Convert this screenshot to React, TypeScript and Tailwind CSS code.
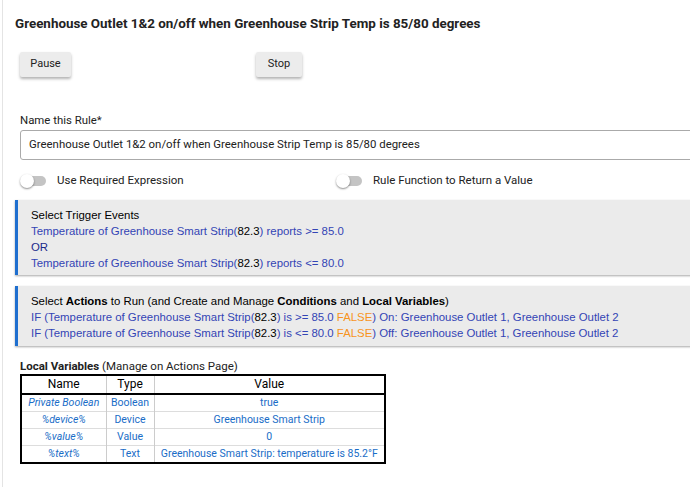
import React from 'react';

const boxFont = { fontFamily: '"Liberation Sans", Arial, sans-serif' };

function Toggle({ label }: { label: string }) {
  return (
    <div className="flex items-center">
      <div className="relative h-[14px] w-[26px]">
        <div className="absolute left-[2px] top-[2px] h-[10px] w-[24px] rounded-full bg-[#c4c4c4]" />
        <div className="absolute left-0 top-0 h-[14px] w-[14px] rounded-full bg-white shadow-[0_1px_2px_rgba(0,0,0,0.45)]" />
      </div>
      <span className="ml-[11px] text-[11.5px] text-[#222]">{label}</span>
    </div>
  );
}

function Button({ children, className = '' }: { children: React.ReactNode; className?: string }) {
  return (
    <button
      className={`h-[25px] rounded-[2px] bg-[#ececec] text-[11px] text-[#222] shadow-[0_2px_3px_rgba(0,0,0,0.3)] ${className}`}
    >
      {children}
    </button>
  );
}

const vars = [
  ['Private Boolean', 'Boolean', 'true'],
  ['%device%', 'Device', 'Greenhouse Smart Strip'],
  ['%value%', 'Value', '0'],
  ['%text%', 'Text', 'Greenhouse Smart Strip: temperature is 85.2°F'],
];

export default function App() {
  const num = <span className="text-black">82.3</span>;
  const no = <span className="text-[#f7941d]">FALSE</span>;

  return (
    <div
      className="h-[487px] w-[690px] overflow-hidden bg-white"
      style={{ fontFamily: 'Roboto, "Liberation Sans", sans-serif' }}
    >
      <div className="ml-[2px] h-full border-l border-[#e4e4e4] pl-[12px]">
        <h1 className="pt-[14px] text-[13.4px] font-bold leading-[20px] text-[#222]">
          Greenhouse Outlet 1&amp;2 on/off when Greenhouse Strip Temp is 85/80 degrees
        </h1>

        <div className="mt-[18px] flex pl-[5px]">
          <Button className="w-[51px]">Pause</Button>
          <Button className="ml-[185px] w-[46px]">Stop</Button>
        </div>

        <div className="mt-[35px] pl-[5px]">
          <div className="text-[11.4px] leading-[16px] text-[#222]">Name this Rule*</div>
          <div className="mt-[2px] flex h-[30px] w-[700px] items-center rounded-[3px] border border-[#aaa] pl-[8px] text-[11.4px] text-[#222]">
            Greenhouse Outlet 1&amp;2 on/off when Greenhouse Strip Temp is 85/80 degrees
          </div>
          <div className="mt-[12px] flex">
            <div className="w-[316px]">
              <Toggle label="Use Required Expression" />
            </div>
            <Toggle label="Rule Function to Return a Value" />
          </div>
        </div>

        <div
          className="mt-[11px] w-[700px] border-l-[3px] border-[#1f6fcf] bg-[#ebebeb] pb-[4px] pl-[13px] pt-[7px] text-[11.4px] leading-[16px] shadow-[0_1px_2px_rgba(0,0,0,0.35)]"
          style={boxFont}
        >
          <div className="text-black">Select Trigger Events</div>
          <div className="text-[#3344b5]">Temperature of Greenhouse Smart Strip({num}) reports &gt;= 85.0</div>
          <div className="text-[#1b2a8a]">OR</div>
          <div className="text-[#3344b5]">Temperature of Greenhouse Smart Strip({num}) reports &lt;= 80.0</div>
        </div>

        <div
          className="mt-[11px] w-[700px] border-l-[3px] border-[#1f6fcf] bg-[#ebebeb] pb-[5px] pl-[13px] pt-[7px] text-[11.4px] leading-[16px] shadow-[0_1px_2px_rgba(0,0,0,0.35)]"
          style={boxFont}
        >
          <div className="text-black">
            Select <b>Actions</b> to Run (and Create and Manage <b>Conditions</b> and <b>Local Variables</b>)
          </div>
          <div className="text-[#3344b5]">
            IF (Temperature of Greenhouse Smart Strip({num}) is &gt;= 85.0 {no}) On: Greenhouse Outlet 1, Greenhouse Outlet 2
          </div>
          <div className="text-[#3344b5]">
            IF (Temperature of Greenhouse Smart Strip({num}) is &lt;= 80.0 {no}) Off: Greenhouse Outlet 1, Greenhouse Outlet 2
          </div>
        </div>

        <div className="mt-[12px] pl-[5px]">
          <div className="text-[11.5px] leading-[16px] text-[#222]">
            <b>Local Variables</b> (Manage on Actions Page)
          </div>
          <table className="w-[366px] table-fixed border-2 border-black text-center">
            <thead>
              <tr className="border-b-2 border-black text-[12px] text-black">
                <th className="h-[19px] w-[85px] border-r border-[#ccc] p-0 font-normal leading-[17px]">Name</th>
                <th className="w-[48px] border-r border-[#ccc] p-0 font-normal leading-[17px]">Type</th>
                <th className="p-0 font-normal leading-[17px]">Value</th>
              </tr>
            </thead>
            <tbody className="text-[10.5px] leading-[16px] text-[#1a6dc7]">
              {vars.map(([n, t, v]) => (
                <tr key={n} className="border-t border-[#ddd]">
                  <td className="h-[17px] whitespace-nowrap border-r border-[#ccc] p-0 italic">{n}</td>
                  <td className="whitespace-nowrap border-r border-[#ccc] p-0">{t}</td>
                  <td className="whitespace-nowrap p-0">{v}</td>
                </tr>
              ))}
            </tbody>
          </table>
        </div>
      </div>
    </div>
  );
}
